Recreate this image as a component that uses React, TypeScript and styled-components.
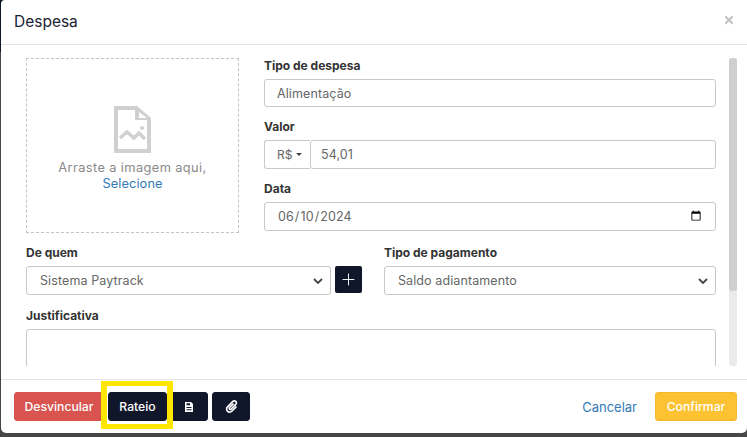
import React from 'react';
import styled, { createGlobalStyle } from 'styled-components';
import { Plus } from 'lucide-react';
import { FaPaperclip, FaTimes } from 'react-icons/fa';

const GlobalStyle = createGlobalStyle`
  * {
    box-sizing: border-box;
  }
  html, body {
    margin: 0;
    height: 100%;
    overflow: hidden;
  }
  body {
    background: linear-gradient(#10172a 0 52px, #474747 52px);
    font-family: Inter, "Open Sans", sans-serif;
    color: #212529;
  }
`;

const Modal = styled.div`
  position: relative;
  margin-left: 1px;
  width: 746px;
  height: 433px;
  background: #fff;
  border-radius: 4px 0 5px 5px;
  display: flex;
  flex-direction: column;
`;

const Header = styled.header`
  height: 45px;
  flex: none;
  padding: 13px 12px 0 13px;
  display: flex;
  justify-content: space-between;
  border-bottom: 1px solid #e5e5e5;
`;

const Title = styled.h4`
  margin: 0;
  font-size: 15.5px;
  line-height: 18px;
  font-weight: 400;
  color: #1a2233;
`;

const Close = styled.button`
  border: 0;
  padding: 0;
  height: 13px;
  background: none;
  color: #c4c4c4;
  font-size: 12px;
  display: flex;
  align-items: center;
`;

const Body = styled.div`
  flex: 1;
  min-height: 0;
  padding: 13px 10px 13px 25px;
  display: flex;
  gap: 13px;
`;

const Scroller = styled.div`
  flex: 1;
  min-width: 0;
  overflow: hidden;
`;

const ScrollTrack = styled.div`
  width: 8px;
  flex: none;
  background: #ebebeb;
  border-radius: 3px;
`;

const ScrollThumb = styled.div`
  height: 233px;
  background: #cfcfcf;
  border-radius: 3px;
`;

const TopRow = styled.div`
  display: flex;
  gap: 25px;
`;

const DropZone = styled.div`
  width: 213px;
  height: 175px;
  flex: none;
  border: 1px dashed #c4c4c4;
  display: flex;
  flex-direction: column;
  align-items: center;
  justify-content: center;
  font-size: 12.8px;
  line-height: 16px;
  letter-spacing: 0.1px;
  color: #8a8a8a;
  padding-top: 6px;
`;

const DropIcon = styled.svg`
  width: 37px;
  height: 47px;
  margin-bottom: 7px;
`;

const DropText = styled.span`
  letter-spacing: 0.4px;
`;

const LinkText = styled.a`
  color: #337ab7;
`;

const Fields = styled.div`
  flex: 1;
  min-width: 0;
  padding-top: 1px;
`;

const Field = styled.div`
  margin-bottom: 13px;
`;

const Label = styled.label`
  display: block;
  font-size: 12px;
  line-height: 14px;
  font-weight: 700;
  color: #333;
  margin-bottom: 6px;
`;

const controlStyle = `
  display: block;
  width: 100%;
  height: 29px;
  border: 1px solid #c8c8c8;
  border-radius: 3px;
  background: #fff;
  color: #666;
  font-family: inherit;
  font-size: 12.5px;
  letter-spacing: 0.1px;
  padding: 0 12px;
  outline: none;
`;

const Input = styled.input`
  ${controlStyle}
  height: 28px;
`;

const DateInput = styled.input`
  ${controlStyle}
  padding-right: 11px;
`;

const InputGroup = styled.div`
  display: flex;
`;

const Addon = styled.span`
  flex: none;
  width: 46px;
  height: 29px;
  border: 1px solid #c8c8c8;
  border-right: 0;
  border-radius: 3px 0 0 3px;
  font-size: 12px;
  color: #666;
  display: flex;
  align-items: center;
  padding-left: 12px;
  gap: 4px;
`;

const Caret = styled.i`
  border-top: 3px solid #444;
  border-left: 3px solid transparent;
  border-right: 3px solid transparent;
`;

const GroupInput = styled.input`
  ${controlStyle}
  padding: 0 10px;
  flex: 1;
  min-width: 0;
`;

const SelectRow = styled.div`
  display: flex;
  margin-top: 2px;
`;

const PartyField = styled.div`
  width: 336px;
  flex: none;
  margin-right: 22px;
`;

const PayField = styled.div`
  flex: 1;
  min-width: 0;
`;

const Inline = styled.div`
  display: flex;
  gap: 4px;
  align-items: flex-start;
`;

const Select = styled.select`
  ${controlStyle}
  appearance: none;
  padding-left: 13px;
  flex: 1;
  min-width: 0;
  background-image: url("data:image/svg+xml,%3Csvg xmlns='http://www.w3.org/2000/svg' width='10' height='6'%3E%3Cpath d='M1 1l4 4 4-4' fill='none' stroke='%23444' stroke-width='1.8'/%3E%3C/svg%3E");
  background-repeat: no-repeat;
  background-position: right 7px center;
`;

const SquareButton = styled.button`
  width: 27px;
  height: 27px;
  flex: none;
  border: 0;
  border-radius: 2px;
  background: #10172a;
  color: #fff;
  display: flex;
  align-items: center;
  justify-content: center;
  padding: 0;
`;

const Notes = styled.div`
  margin-top: 14px;
`;

const TextArea = styled.textarea`
  ${controlStyle}
  height: 90px;
  resize: none;
`;

const Footer = styled.footer`
  height: 54px;
  flex: none;
  border-top: 1px solid #e5e5e5;
  padding: 12px 10px 0 13px;
  display: flex;
  justify-content: space-between;
  align-items: flex-start;
`;

const ButtonGroup = styled.div`
  display: flex;
  align-items: center;
  gap: 4px;
`;

const Button = styled.button<{ $tone: 'red' | 'dark' | 'yellow' }>`
  height: 29px;
  border-radius: 3px;
  border: 1px solid
    ${({ $tone }) => ($tone === 'red' ? '#d9534f' : $tone === 'yellow' ? '#f5b82e' : '#10172a')};
  background: ${({ $tone }) => ($tone === 'red' ? '#d9534f' : $tone === 'yellow' ? '#fdc231' : '#10172a')};
  color: #fff;
  font-family: inherit;
  font-size: 12.2px;
  font-weight: 500;
  display: flex;
  align-items: center;
  justify-content: center;
  padding: 0;
`;

const Desvincular = styled(Button)`
  width: 90px;
`;

const Rateio = styled(Button)`
  position: relative;
  width: 59px;
  margin-right: -1px;
  z-index: 1;

  /* yellow highlight drawn on top of the screenshot */
  &::after {
    content: '';
    position: absolute;
    left: -8px;
    right: -7px;
    top: -12px;
    bottom: -9px;
    border-style: solid;
    border-color: #ffe600;
    border-width: 5px 6px;
    pointer-events: none;
  }
`;

const IconButton = styled(Button)`
  width: 38px;
`;

const CancelLink = styled.a`
  font-size: 13px;
  color: #337ab7;
`;

const Actions = styled.div`
  display: flex;
  align-items: center;
  gap: 18px;
`;

const Confirm = styled(Button)`
  width: 82px;
`;

export default function App() {
  return (
    <>
      <GlobalStyle />
      <Modal>
        <Header>
          <Title>Despesa</Title>
          <Close aria-label="Fechar">
            <FaTimes />
          </Close>
        </Header>
        <Body>
          <Scroller>
            <TopRow>
              <DropZone>
                <DropIcon viewBox="0 0 37 47">
                  <path
                    fillRule="evenodd"
                    fill="#d0d0d0"
                    d="M0 0H23L37 12V47H0ZM4 4V43H33V14H21V4ZM25 6V12H33Z"
                  />
                  <path d="M6 32L13 26L20 32L25 27L31 33" fill="none" stroke="#d0d0d0" strokeWidth="3.5" />
                  <circle cx="28" cy="22" r="2" fill="#d0d0d0" />
                </DropIcon>
                <DropText>Arraste a imagem aqui,</DropText>
                <LinkText>Selecione</LinkText>
              </DropZone>
              <Fields>
                <Field>
                  <Label>Tipo de despesa</Label>
                  <Input defaultValue="Alimentação" />
                </Field>
                <Field>
                  <Label>Valor</Label>
                  <InputGroup>
                    <Addon>
                      R$ <Caret />
                    </Addon>
                    <GroupInput defaultValue="54,01" />
                  </InputGroup>
                </Field>
                <Field>
                  <Label>Data</Label>
                  <DateInput type="date" defaultValue="2024-06-10" />
                </Field>
              </Fields>
            </TopRow>
            <SelectRow>
              <PartyField>
                <Label>De quem</Label>
                <Inline>
                  <Select defaultValue="Sistema Paytrack">
                    <option>Sistema Paytrack</option>
                  </Select>
                  <SquareButton aria-label="Adicionar">
                    <Plus size={19} strokeWidth={1.2} />
                  </SquareButton>
                </Inline>
              </PartyField>
              <PayField>
                <Label>Tipo de pagamento</Label>
                <Select defaultValue="Saldo adiantamento">
                  <option>Saldo adiantamento</option>
                </Select>
              </PayField>
            </SelectRow>
            <Notes>
              <Label>Justificativa</Label>
              <TextArea />
            </Notes>
          </Scroller>
          <ScrollTrack>
            <ScrollThumb />
          </ScrollTrack>
        </Body>
        <Footer>
          <ButtonGroup>
            <Desvincular $tone="red">Desvincular</Desvincular>
            <Rateio $tone="dark">Rateio</Rateio>
            <IconButton $tone="dark" aria-label="Documento">
              <svg width="8" height="10" viewBox="0 0 8 10">
                <path
                  fill="#fff"
                  fillRule="evenodd"
                  d="M0 0H6L8 2V10H0ZM1.5 1.2V3.2H5V1.2ZM1.5 5V6H6.5V5ZM1.5 7.2V8.2H6.5V7.2Z"
                />
              </svg>
            </IconButton>
            <IconButton $tone="dark" aria-label="Anexo">
              <FaPaperclip size={13} />
            </IconButton>
          </ButtonGroup>
          <Actions>
            <CancelLink>Cancelar</CancelLink>
            <Confirm $tone="yellow">Confirmar</Confirm>
          </Actions>
        </Footer>
      </Modal>
    </>
  );
}
